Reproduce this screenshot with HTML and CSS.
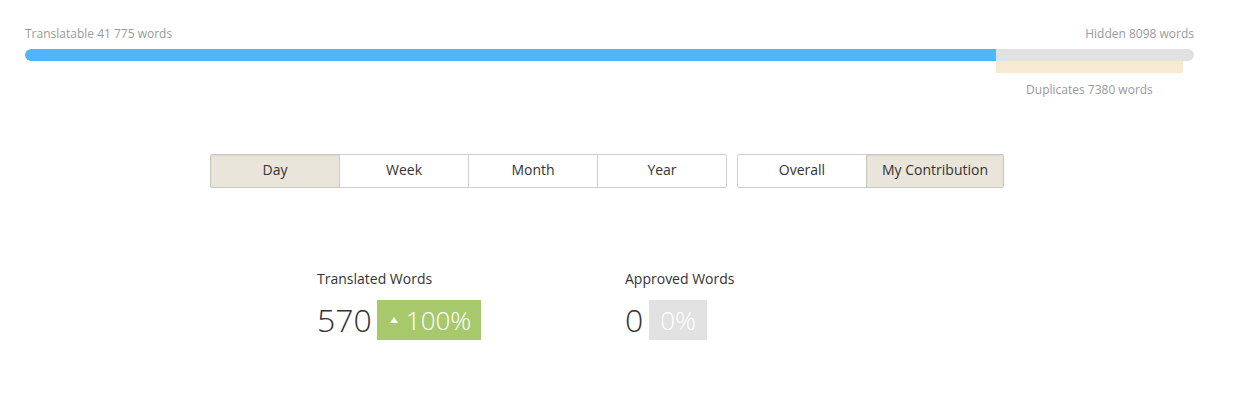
FILE: index.html
```html
<!DOCTYPE html>
<html>
<head>
<meta charset="utf-8">
<link rel="stylesheet" href="styles.css">
</head>
<body>
<div class="page">
  <div class="progress">
    <div class="labels">
      <span>Translatable 41 775 words</span>
      <span>Hidden 8098 words</span>
    </div>
    <div class="bar">
      <div class="bar-fill" style="width:83.06%"></div>
    </div>
    <div class="dup-row">
      <div class="dup" style="margin-left:83.06%;width:15.995%">
        <div class="dup-bar"></div>
        <div class="dup-label">Duplicates 7380 words</div>
      </div>
    </div>
  </div>

  <div class="toolbar">
    <div class="group">
      <button class="btn active">Day</button>
      <button class="btn">Week</button>
      <button class="btn">Month</button>
      <button class="btn">Year</button>
    </div>
    <div class="group">
      <button class="btn">Overall</button>
      <button class="btn active wide">My Contribution</button>
    </div>
  </div>

  <div class="stats">
    <div class="stat first">
      <div class="stat-label">Translated Words</div>
      <div class="stat-value">
        <span class="num">570</span>
        <span class="badge up"><span class="tri"></span>100%</span>
      </div>
    </div>
    <div class="stat">
      <div class="stat-label">Approved Words</div>
      <div class="stat-value">
        <span class="num num-zero">0</span>
        <span class="badge zero">0%</span>
      </div>
    </div>
  </div>
</div>
</body>
</html>
```

FILE: styles.css
```css
* { box-sizing: border-box; }
body {
  margin: 0;
  font-family: "Open Sans", "Liberation Sans", sans-serif;
  color: #333;
  background: #fff;
}
.page {
  padding: 0 45px 0 25px;
}
.progress {
  padding-top: 27px;
}
.labels {
  display: flex;
  justify-content: space-between;
  font-size: 12px;
  line-height: 14px;
  color: #9a9a9a;
}
.bar {
  margin-top: 8px;
  height: 12px;
  border-radius: 6px;
  background: #e1e1e1;
  overflow: hidden;
}
.bar-fill {
  height: 100%;
  background: #4cb7fc;
  border-radius: 6px 0 0 6px;
}
.dup-row {
  display: flex;
}
.dup {
  display: flex;
  flex-direction: column;
  align-items: center;
}
.dup-bar {
  width: 100%;
  height: 12px;
  background: #f7ead0;
}
.dup-label {
  margin-top: 10px;
  font-size: 12px;
  line-height: 14px;
  color: #9a9a9a;
  white-space: nowrap;
}
.toolbar {
  display: flex;
  gap: 10px;
  margin-top: 57px;
  padding-left: 185px;
}
.group {
  display: flex;
}
.btn {
  width: 130px;
  height: 34px;
  margin: 0;
  margin-left: -1px;
  font-family: "Open Sans", "Liberation Sans", sans-serif;
  font-size: 14px;
  line-height: 18px;
  color: #333;
  background: #fff;
  border: 1px solid #cfcfcf;
  border-radius: 0;
  padding: 0 0 2px;
}
.group .btn:first-child {
  margin-left: 0;
  border-radius: 2px 0 0 2px;
}
.group .btn:last-child {
  border-radius: 0 2px 2px 0;
}
.btn.wide { width: 138px; }
.btn.active {
  background: #e9e5da;
  border-color: #c9c7c0;
  box-shadow: inset 0 1px 2px rgba(0,0,0,0.06);
}
.stats {
  display: flex;
  margin-top: 81px;
  padding-left: 292px;
}
.stat.first { width: 308px; }
.stat-label {
  font-size: 14px;
  line-height: 20px;
}
.stat-value {
  display: flex;
  align-items: center;
  margin-top: 11px;
  height: 40px;
}
.num {
  font-size: 32px;
  font-weight: 300;
  line-height: 40px;
  margin-right: 5px;
}
.num-zero { margin-right: 6px; }
.badge {
  display: flex;
  align-items: center;
  height: 40px;
  padding: 0 10px;
  font-size: 26px;
  font-weight: 300;
  color: #fff;
}
.badge.up { background: #a7c96c; padding: 0 10px 0 13px; }
.badge.zero { background: #e1e1e1; padding: 0 11px; }
.tri {
  width: 0;
  height: 0;
  border-left: 4px solid transparent;
  border-right: 4px solid transparent;
  border-bottom: 6px solid #fff;
  margin: 0 8px 0 0;
}
```
